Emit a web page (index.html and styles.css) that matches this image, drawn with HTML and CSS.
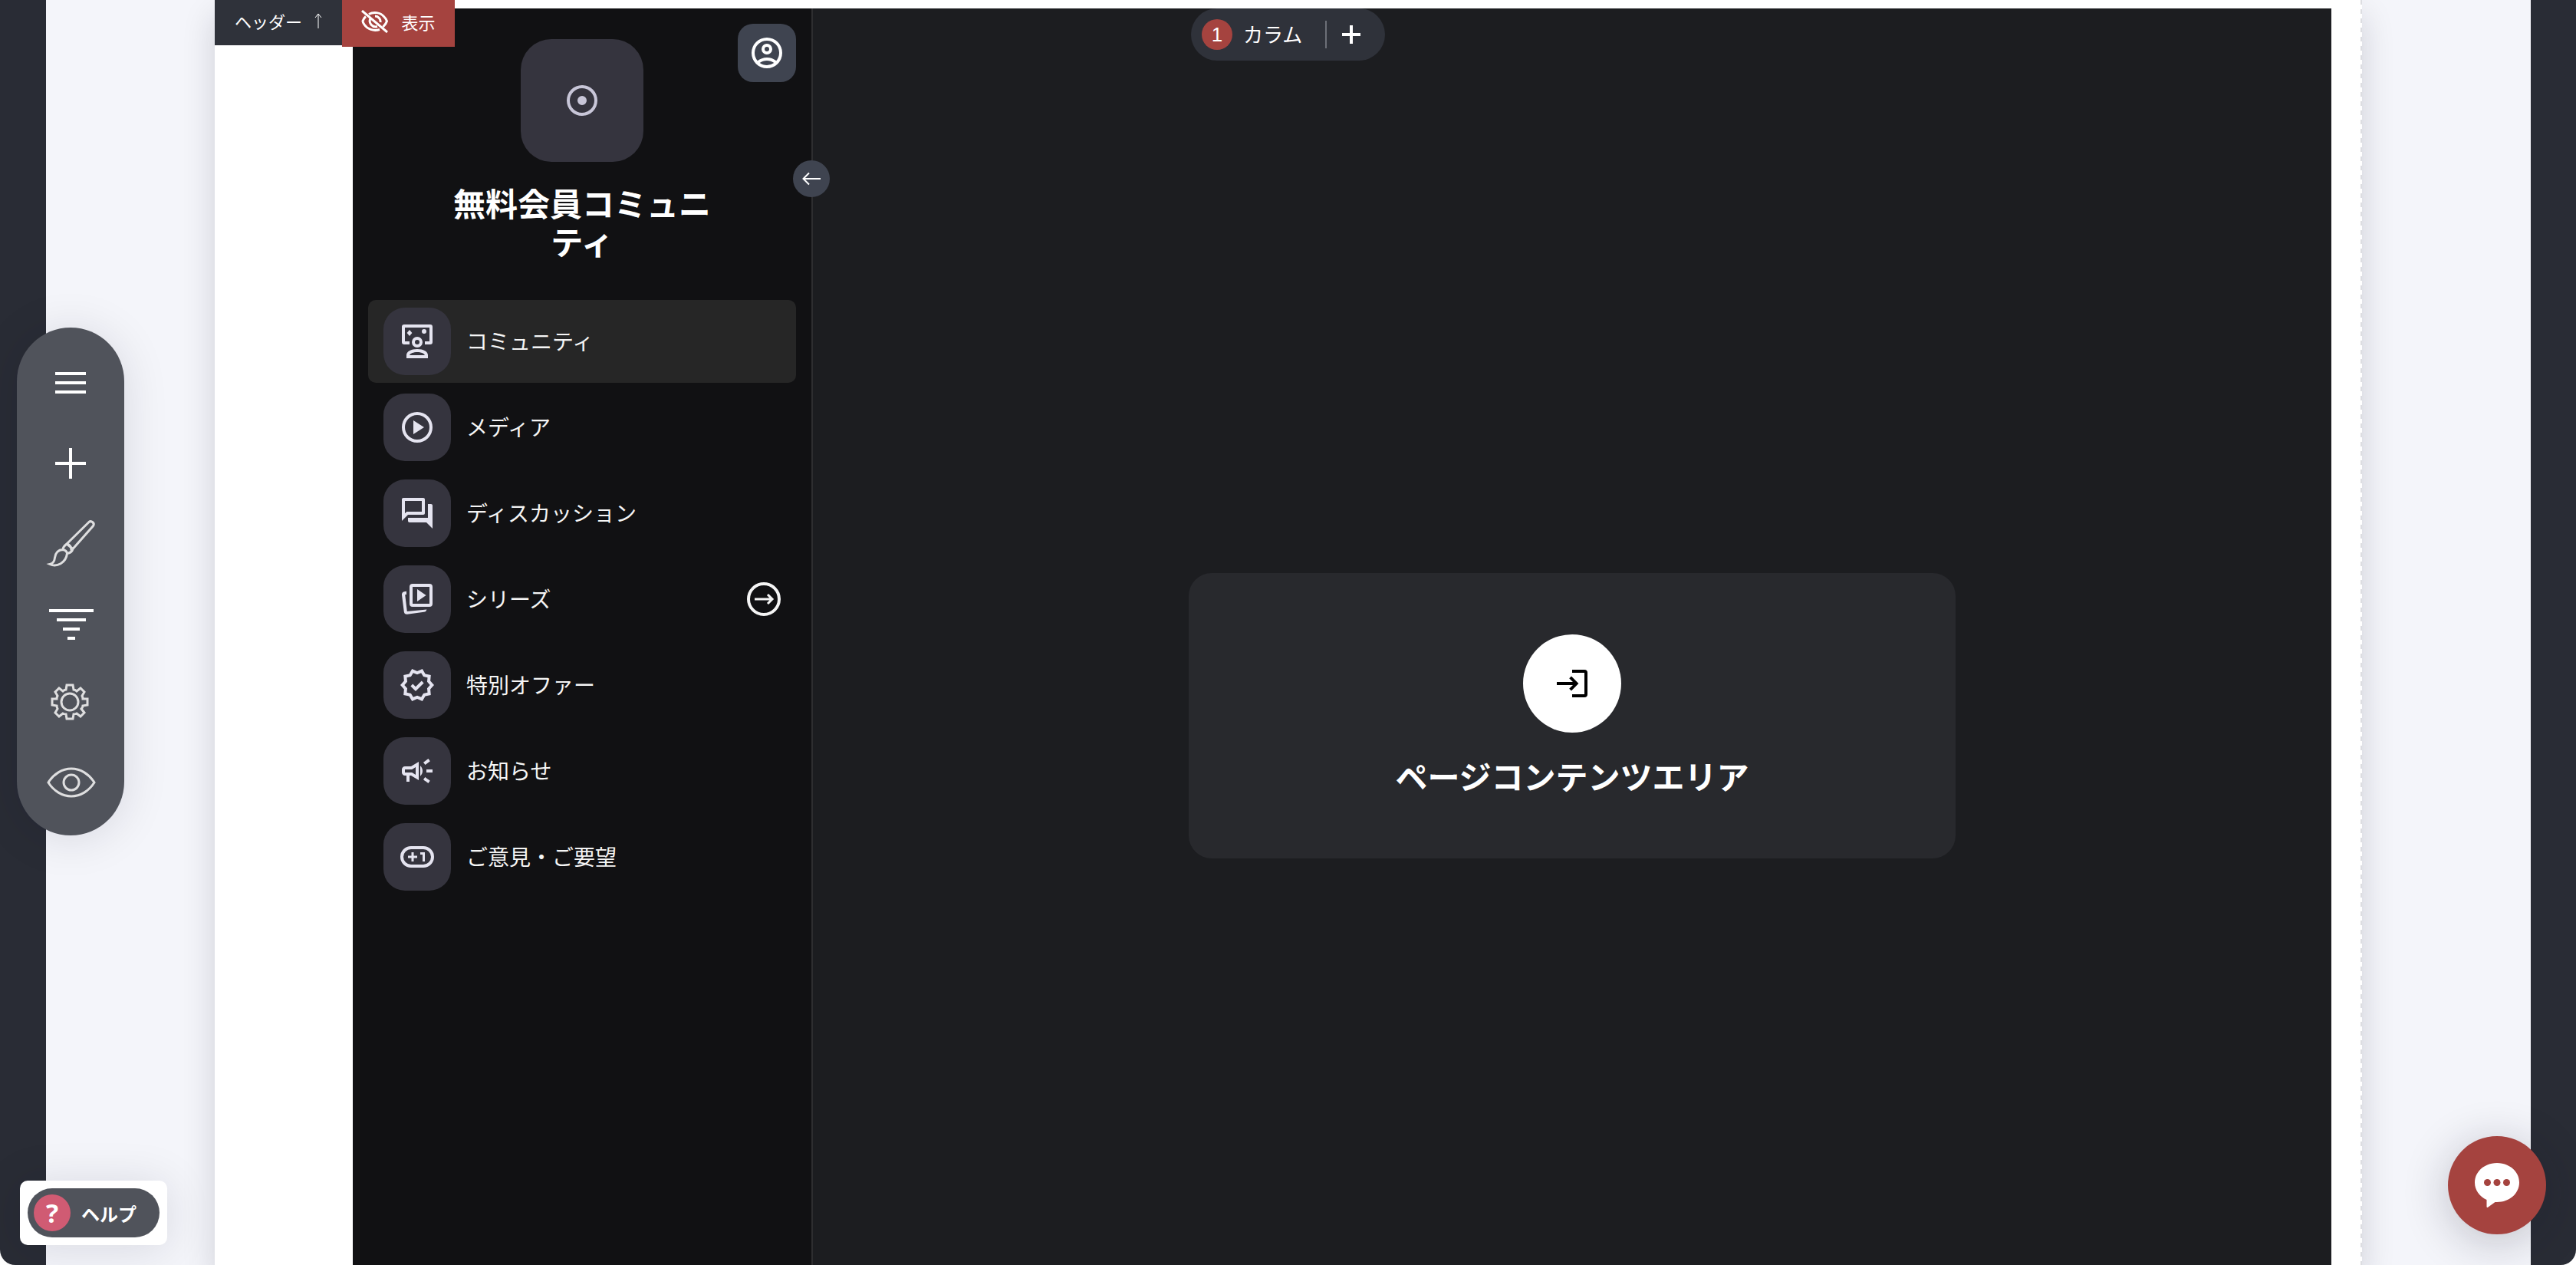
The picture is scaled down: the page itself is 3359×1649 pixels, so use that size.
FILE: index.html
```html
<!DOCTYPE html>
<html lang="ja">
<head>
<meta charset="utf-8">
<meta name="viewport" content="width=device-width, initial-scale=1">
<title>無料会員コミュニティ</title>
<link rel="stylesheet" href="styles.css">
</head>
<body>
<div class="editor">
  <main class="canvas">
    <aside class="sidebar">
      <button class="profile" type="button" aria-label="プロフィール">
        <svg class="icon" viewBox="0 0 24 24"><path d="M12 2a10 10 0 1 0 0 20 10 10 0 0 0 0-20ZM7.35 18.5c1.3-.95 2.9-1.5 4.65-1.5s3.35.55 4.65 1.5A7.93 7.93 0 0 1 12 20c-1.73 0-3.33-.56-4.65-1.5Zm10.79-1.38A9.95 9.95 0 0 0 12 15c-2.32 0-4.45.8-6.14 2.12A8 8 0 1 1 18.14 17.12ZM12 6a3.5 3.5 0 1 0 0 7 3.5 3.5 0 0 0 0-7Zm0 5a1.5 1.5 0 1 1 0-3 1.5 1.5 0 0 1 0 3Z"/></svg>
      </button>
      <button class="collapse" type="button" aria-label="サイドバーを閉じる">
        <svg viewBox="0 0 24 24"><path d="M24 12H1.500M9 4.500L1.500 12L9 19.500"/></svg>
      </button>
      <div class="logo">
        <svg class="icon" viewBox="0 0 24 24"><path d="M12 2a10 10 0 1 0 0 20 10 10 0 0 0 0-20Zm0 18a8 8 0 1 1 0-16 8 8 0 0 1 0 16Zm0-11a3 3 0 1 0 0 6 3 3 0 0 0 0-6Z"/></svg>
      </div>
      <h1 class="title">無料会員コミュニティ</h1>
      <nav class="nav">
        <a class="nav-item active" href="#community">
          <span class="tile"><svg class="icon" viewBox="0 0 24 24"><path d="M3.500 1H20.500A1.500 1.500 0 0 1 22 2.500V12.500A1.500 1.500 0 0 1 20.500 14H17V12H20V3H4V12H7V14H3.500A1.500 1.500 0 0 1 2 12.500V2.500A1.500 1.500 0 0 1 3.500 1ZM7 4.500 8.700 6.500 7 8.500 5.300 6.500ZM16.500 4a1.500 1.500 0 1 1 0 3 1.500 1.500 0 0 1 0-3ZM12 9a3.500 3.500 0 1 0 0 7 3.500 3.500 0 0 0 0-7Zm0 5a1.500 1.500 0 1 1 0-3 1.500 1.500 0 0 1 0 3ZM5 23v-2c0-2.500 3-4 7-4s7 1.500 7 4v2Zm2-2h10c-.5-1.200-2.500-2-5-2s-4.500.8-5 2Z"/></svg></span>
          <span class="label">コミュニティ</span>
        </a>
        <a class="nav-item" href="#media">
          <span class="tile"><svg class="icon" viewBox="0 0 24 24"><path d="M9.500 16.500l7-4.500-7-4.500v9ZM12 2a10 10 0 1 0 0 20 10 10 0 0 0 0-20Zm0 18a8 8 0 1 1 0-16 8 8 0 0 1 0 16Z"/></svg></span>
          <span class="label">メディア</span>
        </a>
        <a class="nav-item" href="#discussion">
          <span class="tile"><svg class="icon" viewBox="0 0 24 24"><path d="M15 4v7H5.170L4 12.170V4h11m1-2H3c-.55 0-1 .45-1 1v14l4-4h10c.55 0 1-.45 1-1V3c0-.55-.45-1-1-1Zm5 4h-2v9H6v2c0 .55.45 1 1 1h11l4 4V7c0-.55-.45-1-1-1Z"/></svg></span>
          <span class="label">ディスカッション</span>
        </a>
        <a class="nav-item" href="#series">
          <span class="tile"><svg class="icon" viewBox="0 0 24 24"><path d="M9 2H20a2 2 0 0 1 2 2V15a2 2 0 0 1-2 2H9a2 2 0 0 1-2-2V4a2 2 0 0 1 2-2Zm0 2V15H20V4Zm3 1.500L17.800 9.500 12 13.500ZM5 6.900v2.100l-.9.100L5.400 20 18.200 18.700c-.3 1.100-.9 1.600-1.800 1.700L5.500 21.900c-1.200.1-2-.5-2.100-1.600L2 9.300C1.900 8.100 2.500 7.400 3.500 7.100Z"/></svg></span>
          <span class="label">シリーズ</span>
          <svg class="go" viewBox="0 0 44 44"><circle cx="22" cy="22" r="20"/><path d="M10 22H33M27 16L33 22L27 28"/></svg>
        </a>
        <a class="nav-item" href="#offer">
          <span class="tile"><svg class="icon" viewBox="0 0 24 24"><path d="M23 12l-2.440-2.780.34-3.680-3.610-.82-1.890-3.180L12 3 8.600 1.540 6.710 4.720l-3.610.81.34 3.680L1 12l2.440 2.780-.34 3.690 3.610.82 1.890 3.180L12 21l3.400 1.460 1.890-3.180 3.610-.82-.34-3.680L23 12Zm-4.510 2.110.26 2.790-2.740.62-1.430 2.410L12 18.820l-2.580 1.110-1.430-2.410-2.740-.62.26-2.800L3.660 12l1.850-2.120-.26-2.780 2.740-.61 1.430-2.410L12 5.180l2.580-1.110 1.430 2.410 2.740.62-.26 2.790L20.340 12l-1.850 2.110ZM11 13.170l-1.880-1.880-1.410 1.420L11 16l5.300-5.290-1.410-1.420Z"/></svg></span>
          <span class="label">特別オファー</span>
        </a>
        <a class="nav-item" href="#news">
          <span class="tile"><svg class="icon" viewBox="0 0 24 24"><path d="M18 11v2h4v-2h-4Zm-2 6.610c.96.710 2.210 1.650 3.200 2.390.4-.53.8-1.070 1.200-1.600-.99-.74-2.240-1.680-3.200-2.400-.4.540-.8 1.080-1.200 1.610ZM20.400 5.600c-.4-.53-.8-1.070-1.200-1.600-.99.740-2.240 1.680-3.200 2.400.4.530.8 1.070 1.200 1.600.96-.72 2.210-1.650 3.200-2.400ZM4 9c-1.100 0-2 .9-2 2v2c0 1.100.9 2 2 2h1v4h2v-4h1l5 3V6L8 9H4Zm5.030 1.710L11 9.530v4.940l-1.970-1.180-.48-.29H4v-2h4.550l.48-.29ZM15.500 12c0-1.330-.58-2.530-1.500-3.350v6.690c.92-.81 1.500-2.010 1.500-3.340Z"/></svg></span>
          <span class="label">お知らせ</span>
        </a>
        <a class="nav-item" href="#feedback">
          <span class="tile"><svg class="icon" viewBox="0 0 24 24"><path d="M8 5H16a7 7 0 0 1 0 14H8A7 7 0 0 1 8 5Zm0 2a5 5 0 0 0 0 10h8a5 5 0 0 0 0-10ZM8.250 9h1.500v2.250H12v1.500H9.750V15h-1.500v-2.250H6v-1.500h2.250ZM14 9h3v6h-1.500v-4.500H14Z"/></svg></span>
          <span class="label">ご意見・ご要望</span>
        </a>
      </nav>
    </aside>
    <section class="content">
      <div class="columns">
        <span class="count">1</span>
        <span class="columns-label">カラム</span>
        <button class="add" type="button" aria-label="カラムを追加"><svg viewBox="0 0 24 24"><path d="M12 0V24M0 12H24"/></svg></button>
      </div>
      <div class="card">
        <span class="enter"><svg viewBox="0 0 24 24"><path d="M12 3h8a2 2 0 0 1 2 2v14a2 2 0 0 1-2 2h-8v-2h8V5h-8ZM11.500 7.200 16.200 12l-4.700 4.800-1.400-1.400 2.400-2.400H2v-2h10.500L10.100 8.600Z"/></svg></span>
        <h2 class="card-title">ページコンテンツエリア</h2>
      </div>
    </section>
    <div class="tabs">
      <button class="tab" type="button">ヘッダー <svg class="tab-arrow" viewBox="0 0 10 20"><path d="M5 20V1M1 6L5 1L9 6"/></svg></button>
      <button class="tab tab-hidden" type="button"><svg class="tab-eye" viewBox="0 0 36 30"><path d="M10 5.500C16 2 25 3 29.500 8.500Q33 12 33.500 14.500Q32.500 18 28.500 22M24 25.500C16 28 8 25 4 19Q2 16 2 14.500Q3 11 6 8.500M12 11A7.500 7.500 0 0 0 21 21.500M18 8A7 7 0 0 1 25 16M1 1L34 29"/></svg>表示</button>
    </div>
  </main>

  <div class="toolbar">
    <button class="tool" type="button" aria-label="メニュー"><svg viewBox="0 0 64 64"><path class="bold" d="M12 19H52M12 31H52M12 43H52"/></svg></button>
    <button class="tool" type="button" aria-label="追加"><svg viewBox="0 0 64 64"><path class="bold" d="M12 32H52M32 12V52"/></svg></button>
    <button class="tool" type="button" aria-label="デザイン"><svg viewBox="0 0 64 64"><path d="M27 33L56 4.500C59 2 64 6 61.500 9.500L35 39.500M27 33L35 39.500M27 33C23 36 22 39 22 40.500M35 39.500C34 43 31 45 27.500 45.500M22 40.500C16 40.500 12 45 11.500 51C11 56 9 58.500 5 59.500C14 63.500 26 58 27.500 45.500C27 43 25 41 22 40.500M27 33C31 34 33 37 33 41.500"/></svg></button>
    <button class="tool" type="button" aria-label="フィルター"><svg viewBox="0 0 64 64"><path class="bold" d="M4 16H62M14 28H52M22 40H44M28 52H38"/></svg></button>
    <button class="tool" type="button" aria-label="設定"><svg viewBox="0 0 64 64"><circle cx="31" cy="31" r="11"/><path d="M27 9H35L36 15Q38 15 40 17L45 13L50 18L47 23Q48 25 48 27L54 27V35L48 36Q48 38 46 40L50 45L45 50L40 46Q38 47 36 47L35 53H27L26 47Q24 47 22 46L17 50L12 45L15 40Q14 38 14 36L8 35V27L14 27Q14 25 15 23L12 18L17 13L22 17Q24 15 26 15Z"/></svg></button>
    <button class="tool" type="button" aria-label="プレビュー"><svg viewBox="0 0 64 64"><circle cx="33" cy="32" r="10"/><path d="M3 32C10 21 21 14 33 14S56 21 63 32C56 43 45 50 33 50S10 43 3 32Z"/></svg></button>
  </div>

  <div class="help-box">
    <button class="help" type="button"><span class="help-mark">?</span>ヘルプ</button>
  </div>

  <button class="chat" type="button" aria-label="チャット">
    <svg viewBox="0 0 58 58"><path fill="#fff" d="M29 0C45 0 58 11 58 25.500S45 51 29 51H26.500L17.500 57.600Q15.500 59 15.500 56.500V48C6 43.500 0 35.500 0 25.500C0 11 13 0 29 0Z"/><g fill="#a5433f"><circle cx="16.500" cy="25.500" r="4.500"/><circle cx="29" cy="25.500" r="4.500"/><circle cx="41.500" cy="25.500" r="4.500"/></g></svg>
  </button>
</div>
</body>
</html>
```
FILE: styles.css
```css
* {
  box-sizing: border-box;
}

body {
  margin: 0;
  background: #fff;
  font-family: "Liberation Sans", "Noto Sans CJK JP", sans-serif;
  font-size: 28px;
  color: #fff;
}

button {
  border: 0;
  padding: 0;
  font: inherit;
  color: inherit;
  cursor: pointer;
}

svg {
  display: block;
}

.editor {
  position: relative;
  display: flex;
  min-height: 100vh;
  padding: 0 220px;
  border: solid #292c35;
  border-width: 0 59px 0 60px;
  border-radius: 0 0 20px 20px;
  background: #f4f5fa;
}

/* Page being edited */
.canvas {
  position: relative;
  display: flex;
  flex: 1;
  min-width: 0;
  padding: 11px 40px 0 180px;
  background: #fff;
  box-shadow: 0 20px 40px rgba(20, 20, 40, 0.16);
}

.canvas::after {
  content: "";
  position: absolute;
  inset: 0 0 0 auto;
  width: 2px;
  background: repeating-linear-gradient(#dcdde1 0 6px, #fff 6px 12px);
}

.tabs {
  position: absolute;
  top: 0;
  left: 0;
  display: flex;
  align-items: flex-start;
}

.tab {
  display: flex;
  align-items: center;
  justify-content: center;
  gap: 16px;
  width: 166px;
  height: 59px;
  padding-bottom: 6px;
  background: #2f323a;
  font-size: 22px;
}

.tab-hidden {
  width: 147px;
  height: 61px;
  background: #a5433f;
}

.tab svg {
  fill: none;
  stroke: #fff;
  stroke-width: 3;
}

.tab .tab-arrow {
  width: 10px;
  height: 20px;
  stroke-width: 1;
}

.tab-eye {
  width: 36px;
  height: 30px;
}

/* Community sidebar */
.sidebar {
  position: relative;
  display: flex;
  flex-direction: column;
  align-items: center;
  flex: none;
  width: 600px;
  padding: 40px 20px;
  border-right: 2px solid #2e2e30;
  background: #111113;
}

.icon {
  width: 48px;
  height: 48px;
  fill: currentColor;
}

.profile {
  position: absolute;
  top: 20px;
  right: 20px;
  display: grid;
  place-items: center;
  width: 76px;
  height: 76px;
  border-radius: 20px;
  background: #3f4450;
}

.collapse {
  position: absolute;
  z-index: 1;
  top: 198px;
  right: -24px;
  display: grid;
  place-items: center;
  width: 48px;
  height: 48px;
  border-radius: 50%;
  background: #3f4450;
}

.collapse svg {
  width: 24px;
  fill: none;
  stroke: #fff;
  stroke-width: 2;
}

.logo {
  display: grid;
  place-items: center;
  width: 160px;
  height: 160px;
  border-radius: 40px;
  background: #35343e;
  color: #c8c6d8;
}

.title {
  width: 340px;
  margin: 32px 0 48px;
  font-size: 42px;
  font-weight: 700;
  line-height: 50px;
  text-align: center;
  word-break: break-all;
}

.nav {
  display: flex;
  flex-direction: column;
  gap: 4px;
  width: 100%;
}

.nav-item {
  display: flex;
  align-items: center;
  gap: 20px;
  padding: 10px 20px;
  border-radius: 10px;
  color: #f5f5f5;
  text-decoration: none;
}

.active {
  background: #262626;
}

.tile {
  display: grid;
  place-items: center;
  width: 88px;
  height: 88px;
  border-radius: 28px;
  background: #35343e;
  color: #e5e4f0;
}

.label {
  flex: 1;
  padding-bottom: 2px;
}

.go {
  width: 44px;
  fill: none;
  stroke: #f5f5f5;
  stroke-width: 4;
}

.go path {
  stroke-width: 3;
}

/* Content area */
.content {
  display: flex;
  flex-direction: column;
  align-items: center;
  flex: 1;
  gap: 668px;
  background: #1c1d20;
}

.columns {
  display: flex;
  align-items: center;
  align-self: flex-start;
  gap: 14px;
  height: 68px;
  margin-left: calc(25% - 2px);
  padding: 0 32px 0 14px;
  border-radius: 34px;
  background: #2f323a;
  font-size: 26px;
}

.columns-label {
  padding-bottom: 4px;
}

.count {
  width: 40px;
  height: 40px;
  border-radius: 50%;
  background: #a5433f;
  line-height: 40px;
  text-align: center;
}

.add {
  margin-left: 16px;
  padding: 6px 0 6px 20px;
  border-left: 2px solid #6c6f77;
  background: none;
}

.add svg {
  width: 24px;
  height: 24px;
  stroke: #fff;
  stroke-width: 4;
}

.card {
  display: flex;
  flex-direction: column;
  align-items: center;
  gap: 36px;
  width: 1000px;
  max-width: 90%;
  padding: 80px 40px;
  border-radius: 30px;
  background: #28292d;
}

.enter {
  display: grid;
  place-items: center;
  width: 128px;
  height: 128px;
  border-radius: 50%;
  background: #fff;
}

.enter svg {
  width: 48px;
  height: 48px;
  fill: #000;
}

.card-title {
  margin: 0;
  font-size: 42px;
  font-weight: 700;
  line-height: 48px;
}

/* Floating controls */
.toolbar {
  position: absolute;
  top: 427px;
  left: -38px;
  display: flex;
  flex-direction: column;
  width: 140px;
  padding: 21px 0 17px;
  border-radius: 70px;
  background: #50535b;
  box-shadow: 0 4px 60px rgba(20, 20, 40, 0.12);
}

.tool {
  display: grid;
  place-items: center;
  height: 104px;
  background: none;
}

.tool svg {
  width: 64px;
  height: 64px;
  overflow: visible;
  fill: none;
  stroke: #dededf;
  stroke-width: 3;
}

.tool .bold {
  stroke: #fff;
  stroke-width: 4;
}

.help-box {
  position: absolute;
  bottom: 26px;
  left: -34px;
  padding: 10px;
  border-radius: 10px;
  background: #fff;
  box-shadow: 0 4px 60px rgba(20, 20, 40, 0.12);
}

.help {
  display: flex;
  align-items: center;
  gap: 14px;
  width: 172px;
  height: 64px;
  padding: 0 8px;
  border-radius: 32px;
  background: #50535b;
  font-size: 24px;
  font-weight: 700;
}

.help-mark {
  width: 48px;
  height: 48px;
  border-radius: 50%;
  background: #d05b73;
  font-family: "Open Sans", sans-serif;
  font-size: 34px;
  line-height: 48px;
}

.chat {
  position: absolute;
  right: -20px;
  bottom: 40px;
  display: grid;
  place-items: center;
  width: 128px;
  height: 128px;
  border-radius: 50%;
  background: #a5433f;
  box-shadow: 0 10px 60px rgba(20, 20, 40, 0.24);
}

.chat svg {
  width: 58px;
  height: 58px;
}
```
